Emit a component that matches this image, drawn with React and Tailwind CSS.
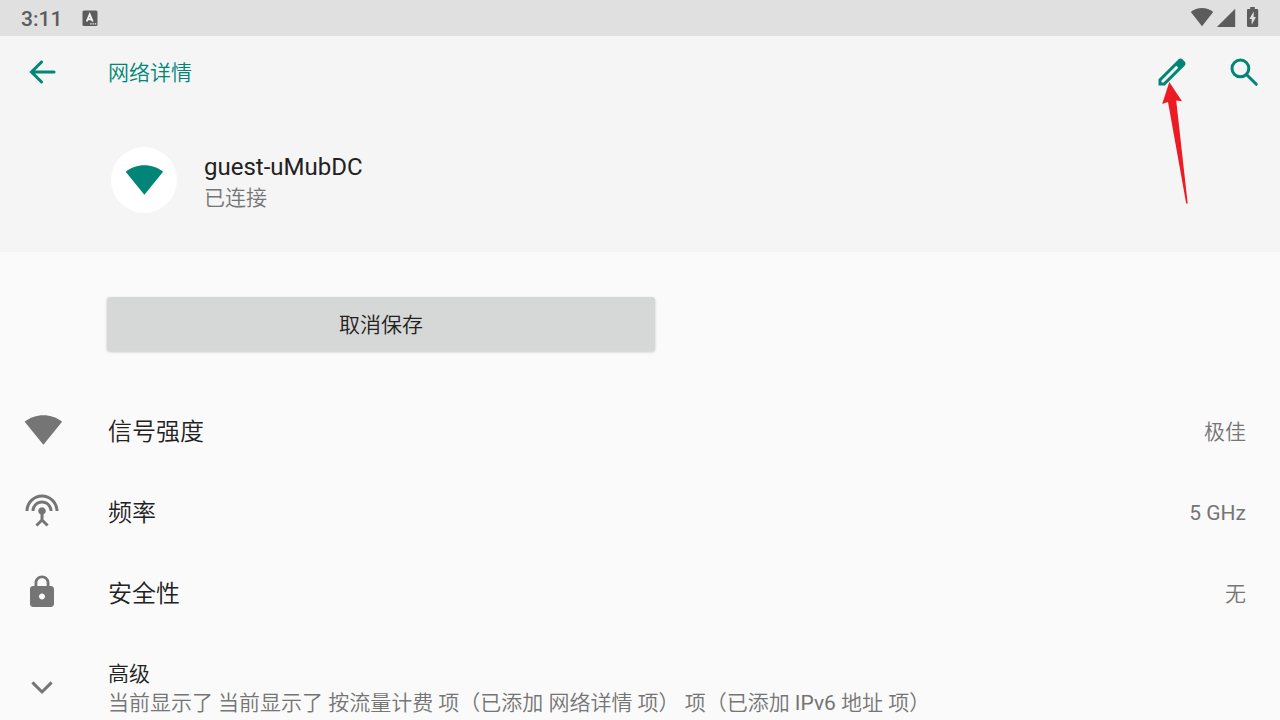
import React from "react";

function StatusBar() {
  return (
    <div className="flex h-9 items-center justify-between bg-[#e0e0e0] px-5 text-[#5c5c5c]">
      <div className="flex items-center gap-5">
        <time className="pt-0.5 pl-px text-[21px] leading-6 font-medium">3:11</time>
        <svg className="size-4" viewBox="0 0 16 16" aria-hidden="true">
          <rect x="0.5" y="0.5" width="15" height="15.5" rx="1.5" fill="currentColor" />
          <path
            d="M4.700 11.500 7.700 4.500l3 7M5.800 9.300h3.800"
            fill="none"
            stroke="#f2f2f2"
            strokeWidth="1.9"
          />
          <path d="M8.200 13.200h1.400v1.300H8.200zM10.500 13.200h1.400v1.300h-1.400zM12.800 13.200h1.400v1.300h-1.400z" fill="#f2f2f2" />
        </svg>
      </div>
      <div className="flex items-center">
        <svg className="h-5 w-6" viewBox="0 0 24 20" fill="currentColor" aria-hidden="true">
          <path d="M12 18.300.8 4C4 1.500 7.800.1 12 .1S20 1.500 23.200 4z" />
        </svg>
        <svg className="ml-0.5 h-5 w-5" viewBox="0 0 20 20" fill="currentColor" aria-hidden="true">
          <path d="M19.200.8V19H.9z" />
        </svg>
        <svg className="ml-2 h-6 w-4" viewBox="0 0 16 24" aria-hidden="true">
          <path
            d="M6.200 1h4.600v2h2.200c.7 0 1.200.5 1.200 1.200v15.600c0 .7-.5 1.200-1.200 1.200H4.200c-.7 0-1.200-.5-1.200-1.200V4.200C3 3.500 3.500 3 4.200 3h2z"
            fill="currentColor"
          />
          <path d="M9.700 5.500 5.400 13h2.300v5.800L12 11H9.700z" fill="#e0e0e0" />
        </svg>
      </div>
    </div>
  );
}

function Wifi() {
  return (
    <svg
      className="h-[30px] w-[38px] overflow-visible"
      viewBox="-0.7 0 38 30"
      fill="currentColor"
      aria-hidden="true"
    >
      <path d="M18.700 29.800 0 6.800C5.200 2.500 11.700.2 18.700.2s13.500 2.300 18.700 6.600z" />
    </svg>
  );
}

function Icon({ d }) {
  return (
    <svg className="size-9" viewBox="0 0 24 24" fill="currentColor" aria-hidden="true">
      <path d={d} />
    </svg>
  );
}

function StrokeIcon({ cap = "round", children }) {
  return (
    <svg
      className="size-9"
      viewBox="0 0 24 24"
      fill="none"
      stroke="currentColor"
      strokeWidth="2"
      strokeLinecap={cap}
      aria-hidden="true"
    >
      {children}
    </svg>
  );
}

const icons = {
  edit: "M20.410 4.940l-1.350-1.350c-.78-.78-2.050-.78-2.830 0L3 16.820V21h4.180L20.410 7.770c.79-.78.79-2.050 0-2.830zM6.410 19.060L5 19v-1.360l9.820-9.820 1.410 1.410-9.820 9.830z",
  antenna:
    "M12 5c-3.870 0-7 3.130-7 7h2c0-2.760 2.240-5 5-5s5 2.240 5 5h2c0-3.870-3.130-7-7-7zm1 9.290c.88-.39 1.500-1.260 1.500-2.290 0-1.380-1.120-2.500-2.500-2.500S9.500 10.620 9.500 12c0 1.020.62 1.900 1.500 2.290v3.300L7.590 21 9 22.410l3-3 3 3L16.410 21 13 17.590v-3.300zM12 1C5.930 1 1 5.930 1 12h2c0-4.970 4.030-9 9-9s9 4.030 9 9h2c0-6.070-4.930-11-11-11z",
  lock: "M18 8h-1V6c0-2.760-2.240-5-5-5S7 3.240 7 6v2H6c-1.100 0-2 .9-2 2v10c0 1.100.9 2 2 2h12c1.100 0 2-.9 2-2V10c0-1.100-.9-2-2-2zm-6 9c-1.100 0-2-.9-2-2s.9-2 2-2 2 .9 2 2-.9 2-2 2zM8.900 8V6c0-1.710 1.390-3.100 3.100-3.100s3.100 1.390 3.100 3.100v2z",
};

function DetailRow({ icon, label, value }) {
  return (
    <div className="flex h-[81px] items-center pr-[34px]">
      <div className="flex w-[108px] shrink-0 pb-0.5 pl-6 text-[#757575]">{icon}</div>
      <dt className="flex-1 pt-0.5 text-2xl font-[350] text-[#212121]">{label}</dt>
      <dd className="pt-0.5 text-[21px] leading-7 font-[350] text-[#757575]">{value}</dd>
    </div>
  );
}

function Latin({ children }) {
  return <span className="font-normal">{children}</span>;
}

export default function App() {
  return (
    <div
      lang="zh-CN"
      className="min-h-screen bg-[#fafafa] font-['Roboto','Noto_Sans_CJK_SC',sans-serif] text-[#212121]"
    >
      <StatusBar />
      <header className="bg-[#f5f5f5]">
        <div className="flex h-[72px] items-center pr-[18px] text-[#008577]">
          <div className="flex w-[108px] shrink-0 pl-6">
            <button type="button" aria-label="返回">
              <StrokeIcon>
                <path d="M20 12H5.200M11.700 5.300 5 12l6.700 6.700" />
              </StrokeIcon>
            </button>
          </div>
          <h1 className="flex-1 pt-0.5 text-[21px] leading-7 font-[350]">网络详情</h1>
          <div className="flex gap-9">
            <div className="relative">
              <button type="button" aria-label="修改" className="block">
                <Icon d={icons.edit} />
              </button>
              <svg
                className="pointer-events-none absolute top-7 left-2 h-[122px] w-[26px]"
                viewBox="0 0 26 122"
                aria-hidden="true"
              >
                <path d="M7.300 0 20 19.300l-5.800-.8L25.700 121.500h-1.500L6 20l-5.800 2z" fill="#ed1c24" />
              </svg>
            </div>
            <button type="button" aria-label="搜索">
              <StrokeIcon>
                <circle cx="9.600" cy="9.600" r="5.600" />
                <path d="M13.800 13.800 20.200 20.200" />
              </StrokeIcon>
            </button>
          </div>
        </div>
        <div className="flex h-36 items-center gap-[27px] pl-[111px]">
          <div className="flex size-[66px] items-center justify-center rounded-full bg-white text-[#008577]">
            <Wifi />
          </div>
          <div className="pt-px">
            <h2 className="text-2xl leading-[34px]">guest-uMubDC</h2>
            <p className="text-[21px] leading-7 font-[350] text-[#757575]">已连接</p>
          </div>
        </div>
      </header>
      <main>
        <div className="grid grid-cols-2 pt-[45px] pr-[77px] pb-[39px] pl-[107px]">
          <button
            type="button"
            className="h-[54px] rounded-[3px] bg-[#d6d7d7] pt-0.5 text-[21px] leading-7 font-[350] shadow-[0_1px_3px_rgba(0,0,0,0.2)]"
          >
            取消保存
          </button>
        </div>
        <dl>
          <DetailRow icon={<Wifi />} label="信号强度" value="极佳" />
          <DetailRow icon={<Icon d={icons.antenna} />} label="频率" value={<Latin>5 GHz</Latin>} />
          <DetailRow icon={<Icon d={icons.lock} />} label="安全性" value="无" />
        </dl>
        <button type="button" aria-expanded="false" className="flex w-full items-center pt-[27px] text-left">
          <span className="flex w-[108px] shrink-0 pb-1 pl-6 text-[#757575]">
            <StrokeIcon cap="butt">
              <path d="M5.600 8.900 12 15.300l6.400-6.400" />
            </StrokeIcon>
          </span>
          <span className="flex-1 text-[21px] leading-[29px] font-[350]">
            <span className="block">高级</span>
            <span className="block text-[#757575]">
              当前显示了 当前显示了 按流量计费 项（已添加 网络详情 项） 项（已添加 <Latin>IPv6</Latin> 地址 项）
            </span>
          </span>
        </button>
      </main>
    </div>
  );
}
